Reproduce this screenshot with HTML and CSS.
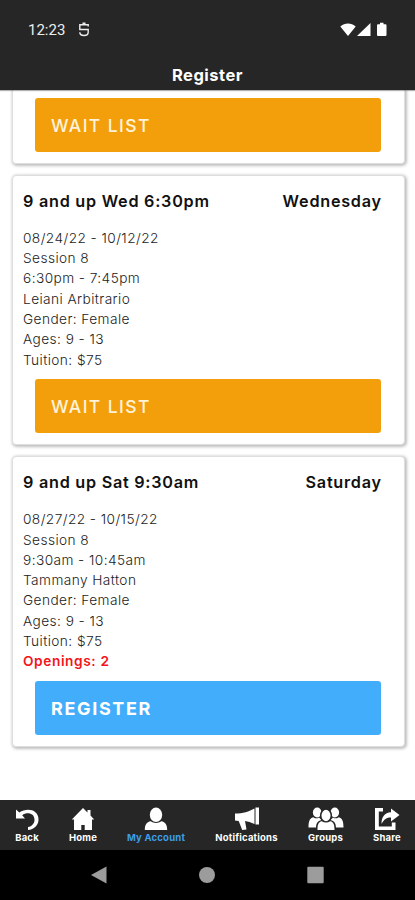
FILE: index.html
```html
<!DOCTYPE html>
<html lang="en">
<head>
<meta charset="utf-8">
<title>Register</title>
<link rel="stylesheet" href="styles.css">
</head>
<body>
<div class="app">
  <header class="top">
    <div class="status">
      <div class="status-left">
        <span class="clock">12:23</span>
        <svg width="12" height="16" viewBox="0 0 12 16" fill="none" stroke="#ededed" stroke-width="1.4"><path d="M10.200 4.600V2.700H1.800v4.800h8.400v2.800c0 1.900-1.700 3.200-4.200 3.200s-4.200-1.300-4.200-3.200M4.500 1.200h3"/></svg>
      </div>
      <svg width="48" height="16" viewBox="0 0 48 16" fill="#fff"><path d="M.3 4.4C4.6.5 11.400.5 15.700 4.400L8 14Z"/><path d="M30.500 1V14H17Z"/><path d="M37 3.200a1 1 0 0 1 1-1h2V.8h3.500v1.400h2a1 1 0 0 1 1 1V13a1 1 0 0 1-1 1H38a1 1 0 0 1-1-1Z"/></svg>
    </div>
    <h1 class="title">Register</h1>
  </header>
  <main class="list">
    <section class="card card-first">
      <button class="btn">WAIT LIST</button>
    </section>
    <section class="card">
      <div class="head"><h2>9 and up Wed 6:30pm</h2><h2 class="day">Wednesday</h2></div>
      <div class="details">
        <p>08/24/22 - 10/12/22</p>
        <p>Session 8</p>
        <p>6:30pm - 7:45pm</p>
        <p>Leiani Arbitrario</p>
        <p>Gender: Female</p>
        <p>Ages: 9 - 13</p>
        <p>Tuition: $75</p>
      </div>
      <button class="btn">WAIT LIST</button>
    </section>
    <section class="card">
      <div class="head"><h2>9 and up Sat 9:30am</h2><h2 class="day">Saturday</h2></div>
      <div class="details">
        <p>08/27/22 - 10/15/22</p>
        <p>Session 8</p>
        <p>9:30am - 10:45am</p>
        <p>Tammany Hatton</p>
        <p>Gender: Female</p>
        <p>Ages: 9 - 13</p>
        <p>Tuition: $75</p>
        <p class="open">Openings: 2</p>
      </div>
      <button class="btn btn-blue">REGISTER</button>
    </section>
  </main>
  <nav class="tabs">
    <a class="tab tab-back"><svg width="24" height="24" viewBox="0 0 24 24"><path d="M1 2.500V11.500H10L7.200 8.200C12 4.500 19.500 6 19.500 12.700c0 4-2.700 6.500-6.500 7.300v3c6-.5 10.500-4.500 10.500-10.500C23.500 2.500 12 .5 4.300 5.500Z"/></svg><span>Back</span></a>
    <a class="tab tab-home"><svg width="24" height="24" viewBox="0 0 24 24"><path d="M12 1 .8 12.500H3V23h7.300v-5h3.400v5H21V12.500h2.200L19.500 8.500V3h-3v2.500Z"/></svg><span>Home</span></a>
    <a class="tab tab-account"><svg width="24" height="24" viewBox="0 0 24 24"><ellipse cx="12" cy="7.800" rx="6.200" ry="7.200"/><path d="M.8 23c0-5 1.700-8 6-8.700 3 2.300 7.400 2.300 10.400 0 4.300.7 6 3.700 6 8.700Z"/></svg><span>My Account</span></a>
    <a class="tab tab-notes"><svg width="26" height="24" viewBox="0 0 26 24"><path d="M1 6.500C9 6.500 15 4.500 20.500 1.500V17c-3.500-1.500-6.500-2.700-9.500-3l1.500 8.500-4.300.5L4.700 14 1 13.500ZM21.500.5H25v17h-3.500Z"/></svg><span>Notifications</span></a>
    <a class="tab tab-groups"><svg width="36" height="24" viewBox="0 0 36 24"><ellipse cx="9.200" cy="5.500" rx="4.300" ry="5"/><ellipse cx="26.800" cy="5.500" rx="4.300" ry="5"/><path d="M.5 20.500c0-5.500.8-9.500 4.800-10.300 2 1.500 4.200 1.500 5.700.3l2.500 2.500C9.500 14 8.300 16 8 20.500Zm35 0c0-5.500-.8-9.500-4.800-10.300-2 1.500-4.200 1.500-5.700.3L22.500 13c4 1 5.200 3 5.500 7.500Z"/><ellipse class="edge" cx="18" cy="8.500" rx="5.300" ry="6.500"/><path d="M9.500 23c0-5 .8-8 4.300-8.700 2.500 1.700 5.900 1.700 8.400 0 3.500.7 4.300 3.700 4.300 8.700Z"/></svg><span>Groups</span></a>
    <a class="tab tab-share"><svg width="26" height="24" viewBox="0 0 26 24"><path d="M9 1H1v22h20.500v-7.500h-3.700V19.500H4.800v-15H9Z"/><path d="M17 1.500 25.500 8 17 14.500V10.500c-4.500 0-6.800 1.500-9.500 6.500 0-7 3-11.500 9.500-11.800Z"/></svg><span>Share</span></a>
  </nav>
  <div class="sysnav">
    <svg width="16" height="18" viewBox="0 0 16 18"><path d="M15.500.5v17L0 9Z"/></svg>
    <svg width="16" height="18" viewBox="0 0 16 18"><circle cx="8" cy="9" r="8"/></svg>
    <svg width="17" height="18" viewBox="0 0 17 18"><rect x=".3" y=".8" width="16.400" height="16.400" rx="1"/></svg>
  </div>
</div>
</body>
</html>
```
FILE: styles.css
```css
* { box-sizing: border-box; }
body { margin: 0; background: #fff; font-family: Inter, "Liberation Sans", sans-serif; }
h1, h2, p { margin: 0; }
.app { height: 900px; display: flex; flex-direction: column; overflow: hidden; }
.top { height: 90px; flex: none; background: #262626; color: #fff; box-shadow: 0 1px 1px rgba(0,0,0,.3); z-index: 1; }
.status { height: 60px; padding: 0 27px 0 28px; display: flex; align-items: center; justify-content: space-between; }
.status-left { display: flex; align-items: center; gap: 13px; }
.clock { font: 400 15px/18px Roboto, sans-serif; color: #ededed; }
.title { height: 30px; text-align: center; font-size: 16.500px; line-height: 31px; font-weight: 700; letter-spacing: .5px; }
.list { flex: 1; min-height: 0; padding: 0 10px 0 12px; display: flex; flex-direction: column; gap: 11px; }
.card { flex: none; border: 1px solid #dedede; border-radius: 4px; background: #fff; box-shadow: 1px 1px 3px 1px rgba(0,0,0,.25); padding: 15.900px 23px 11px 10px; }
.card-first { height: 74px; border-top: 0; padding-top: 8px; border-radius: 0 0 4px 4px; }
.head { display: flex; justify-content: space-between; height: 35px; }
.head h2 { font-size: 16.200px; line-height: 19px; font-weight: 600; letter-spacing: .75px; margin-right: -.75px; color: #111; white-space: nowrap; }
.details { padding-top: 1px; margin-bottom: 9.500px; font-size: 13.700px; line-height: 20.280px; letter-spacing: .42px; font-weight: 300; color: #222; }
.details .open { color: #f4141b; font-weight: 600; letter-spacing: .6px; }
.btn { display: block; width: 346px; height: 54px; margin-left: 12px; padding: 1px 16px 0; border: 0; border-radius: 3px; background: #f39f0b; color: #fff3dc; font-family: inherit; font-size: 17.500px; font-weight: 500; letter-spacing: 1.400px; text-align: left; }
.btn-blue { background: #41adfb; color: #fff; font-weight: 700; font-size: 18px; letter-spacing: 1.650px; }
.tabs { height: 50px; flex: none; background: #262626; display: flex; gap: 30px; padding: 7px 14px 0 15px; }
.tab { display: flex; flex-direction: column; align-items: center; color: #fff; font-size: 9.500px; font-weight: 700; letter-spacing: .2px; line-height: 12px; flex: none; white-space: nowrap; }
.tab svg { fill: #fff; flex: none; height: 24px; margin-bottom: 1px; }
.tab .edge { stroke: #262626; stroke-width: 1.500px; }
.tab-back { width: 24px; }
.tab-home { width: 28px; }
.tab-account { width: 58px; color: #3d9fe6; }
.tab-notes { width: 63px; }
.tab-groups { width: 35px; }
.tab-share { width: 28px; }
.sysnav { height: 50px; flex: none; background: #000; display: flex; align-items: center; justify-content: space-between; padding: 0 91px; }
.sysnav svg { fill: #9c9c9c; }
```
